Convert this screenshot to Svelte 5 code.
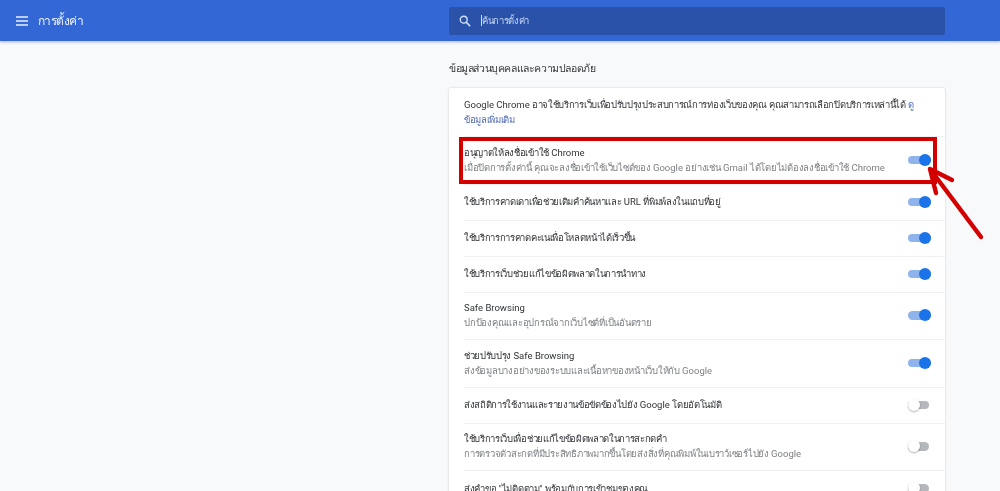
<script>
  const rows = [
    { t: 'อนุญาตให้ลงชื่อเข้าใช้ Chrome', s: 'เมื่อปิดการตั้งค่านี้ คุณจะลงชื่อเข้าใช้เว็บไซต์ของ Google อย่างเช่น Gmail ได้โดยไม่ต้องลงชื่อเข้าใช้ Chrome', on: true },
    { t: 'ใช้บริการคาดเดาเพื่อช่วยเติมคำค้นหาและ URL ที่พิมพ์ลงในแถบที่อยู่', on: true },
    { t: 'ใช้บริการการคาดคะเนเพื่อโหลดหน้าได้เร็วขึ้น', on: true },
    { t: 'ใช้บริการเว็บช่วยแก้ไขข้อผิดพลาดในการนำทาง', on: true },
    { t: 'Safe Browsing', s: 'ปกป้องคุณและอุปกรณ์จากเว็บไซต์ที่เป็นอันตราย', on: true },
    { t: 'ช่วยปรับปรุง Safe Browsing', s: 'ส่งข้อมูลบางอย่างของระบบและเนื้อหาของหน้าเว็บให้กับ Google', on: true },
    { t: 'ส่งสถิติการใช้งานและรายงานข้อขัดข้องไปยัง Google โดยอัตโนมัติ', on: false },
    { t: 'ใช้บริการเว็บเพื่อช่วยแก้ไขข้อผิดพลาดในการสะกดคำ', s: 'การตรวจตัวสะกดที่มีประสิทธิภาพมากขึ้นโดยส่งสิ่งที่คุณพิมพ์ในเบราว์เซอร์ไปยัง Google', on: false },
    { t: 'ส่งคำขอ "ไม่ติดตาม" พร้อมกับการเข้าชมของคุณ', on: false }
  ];
  const runs = (text) => text.split(/([\u0E00-\u0E7F]+)/).filter(Boolean).map((v) => ({ v, th: /[\u0E00-\u0E7F]/.test(v) }));
  const intro = 'Google Chrome อาจใช้บริการเว็บเพื่อปรับปรุงประสบการณ์การท่องเว็บของคุณ คุณสามารถเลือกปิดบริการเหล่านี้ได้ ';
</script>

{#snippet mixed(text)}{#each runs(text) as r}<span class:th={r.th}>{r.v}</span>{/each}{/snippet}

<div class="page">
  <header class="bar">
    <div class="brand">
      <svg class="menu" viewBox="0 0 12 10" width="12" height="10"><path d="M0 1h12M0 5h12M0 9h12" stroke="#e8f0fe" stroke-width="1.4" fill="none"/></svg>
      <span class="title">การตั้งค่า</span>
    </div>
    <div class="search">
      <svg class="glass" viewBox="0 0 14 14" width="12" height="12"><circle cx="5.5" cy="5.5" r="4" stroke="#cfe0fb" stroke-width="1.6" fill="none"/><path d="M8.5 8.5L13 13" stroke="#cfe0fb" stroke-width="1.8"/></svg>
      <span class="caret"></span>
      <span class="ph">ค้นการตั้งค่า</span>
    </div>
  </header>

  <main class="main">
    <h2 class="heading">ข้อมูลส่วนบุคคลและความปลอดภัย</h2>
    <section class="card">
      <div class="intro">
        <div class="line">{@render mixed(intro)}<span class="link th">ดู</span></div>
        <div class="line link th">ข้อมูลเพิ่มเติม</div>
      </div>
      {#each rows as r}
        <div class="row" class:two={r.s}>
          <div class="text">
            <div class="t">{@render mixed(r.t)}</div>
            {#if r.s}<div class="s">{@render mixed(r.s)}</div>{/if}
          </div>
          <span class="toggle" class:on={r.on}><span class="track"></span><span class="knob"></span></span>
        </div>
      {/each}
    </section>
  </main>

  <svg class="note" viewBox="0 0 1000 491" width="1000" height="491">
    <rect x="461" y="139" width="474" height="43" fill="none" stroke="#d40000" stroke-width="4"/>
    <path d="M981 237L930 169M930 169L936 193M930 169L952 180" fill="none" stroke="#d40000" stroke-width="4.4" stroke-linecap="round"/>
  </svg>
</div>

<style>
  :global(body) { margin: 0; overflow: hidden; }
  .page {
    position: relative;
    width: 1000px;
    height: 491px;
    overflow: hidden;
    background: #f8f9fb;
    font-family: Roboto, "Noto Sans", "DejaVu Sans", sans-serif;
    filter: blur(0.35px);
  }
  .bar {
    height: 41px;
    background: #3367d6;
    box-shadow: 0 1px 3px rgba(60, 90, 160, 0.45);
    display: flex;
    align-items: center;
    box-sizing: border-box;
  }
  .brand {
    width: 449px;
    display: flex;
    align-items: center;
    gap: 10px;
    padding-left: 16px;
    box-sizing: border-box;
  }
  .title { color: #eaf1fe; font-size: 12px; font-weight: 500; letter-spacing: -0.55px; }
  .search {
    width: 496px;
    height: 28px;
    background: #2a52a8;
    border-radius: 2px;
    display: flex;
    align-items: center;
    padding-left: 10px;
    box-sizing: border-box;
  }
  .glass { margin-right: 10px; }
  .caret { width: 1px; height: 11px; background: #cfe0fb; }
  .ph { color: #c5d6f5; font-size: 9.5px; letter-spacing: -0.35px; }
  .main { padding: 19px 0 0 449px; width: 496px; }
  .heading {
    margin: 0 0 11px;
    font-size: 10.5px;
    line-height: 17px;
    font-weight: 500;
    color: #35383b;
    white-space: nowrap;
    letter-spacing: -0.4px;
  }
  .card {
    background: #fff;
    border-radius: 2px;
    box-shadow: 0 0 2px rgba(60, 64, 67, 0.3);
    width: 496px;
  }
  .intro {
    padding: 9px 15px 7px;
    font-size: 9.5px;
    color: #33363a;
    height: 48px;
    box-sizing: border-box;
  }
  .line { line-height: 15px; white-space: nowrap; }
  .th { letter-spacing: -0.32px; }
  .link { color: #4f68b4; }
  .row {
    height: 36px;
    display: flex;
    align-items: center;
    justify-content: space-between;
    margin-left: 15px;
    padding: 0 14px 1px 0;
    border-top: 1px solid #eff0f1;
    box-sizing: border-box;
  }
  .row.two { height: 47.5px; }
  .t { font-size: 9.5px; line-height: 15px; color: #303337; white-space: nowrap; }
  .s { font-size: 9.5px; line-height: 15px; color: #7d8085; white-space: nowrap; }
  .s .th { letter-spacing: -0.25px; }
  .toggle { position: relative; width: 23px; height: 12px; display: block; flex: none; }
  .track {
    position: absolute;
    left: 0;
    right: 2px;
    top: 2px;
    height: 8.5px;
    border-radius: 5px;
    background: #b4b7bb;
  }
  .knob {
    position: absolute;
    left: 0;
    top: 0;
    width: 12px;
    height: 12px;
    border-radius: 50%;
    background: #fff;
    box-shadow: 0 1px 2px rgba(0, 0, 0, 0.3);
  }
  .toggle.on .track { background: #8fb4ec; right: 0; }
  .toggle.on .knob { left: 11px; background: #1a73e8; box-shadow: none; }
  .note { position: absolute; left: 0; top: 0; pointer-events: none; }
</style>
